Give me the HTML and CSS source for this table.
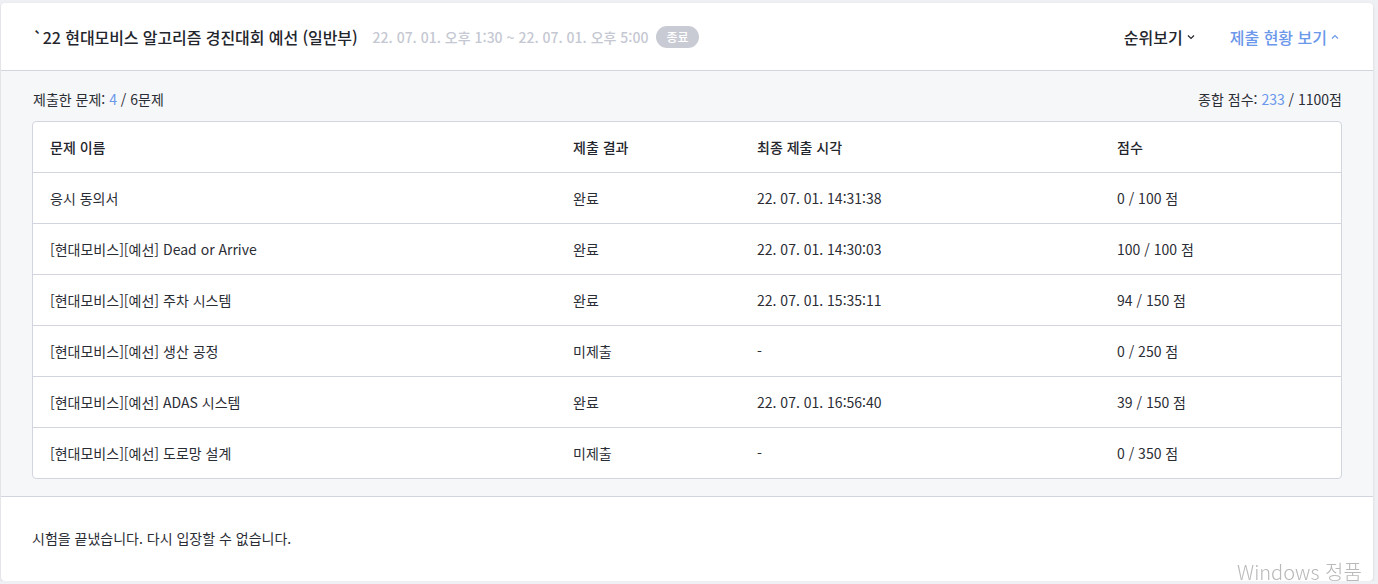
FILE: index.html
```html
<!DOCTYPE html>
<html lang="ko">
<head>
    <meta charset="UTF-8">
    <meta name="viewport" content="width=device-width, initial-scale=1.0">
    <title>제출 현황</title>

    <link rel="stylesheet" href="styles.css">
</head>
<body>

    <div class="card">
        <header class="card-header">
            <div class="title-group">
                <h1 class="title">`22 현대모비스 알고리즘 경진대회 예선 (일반부)</h1>
                <span class="period">22. 07. 01. 오후 1:30 ~ 22. 07. 01. 오후 5:00</span>
                <span class="badge">종료</span>
            </div>
            <nav class="actions">
                <a class="action">순위보기
                    <svg width="10" height="10" viewBox="0 0 10 10"><path d="M2 3.5 L5 6.5 L8 3.5" fill="none" stroke="currentColor" stroke-width="1.2"/></svg>
                </a>
                <a class="action active">제출 현황 보기
                    <svg width="10" height="10" viewBox="0 0 10 10"><path d="M2 6.5 L5 3.5 L8 6.5" fill="none" stroke="currentColor" stroke-width="1.2"/></svg>
                </a>
            </nav>
        </header>

        <section class="status">
            <div class="summary">
                <span>제출한 문제: <em>4</em> / 6문제</span>
                <span>종합 점수: <em>233</em> / 1100점</span>
            </div>

            <div class="table-wrap">
                <table class="results">
                    <colgroup>
                        <col style="width: 523px">
                        <col style="width: 184px">
                        <col style="width: 360px">
                        <col>
                    </colgroup>
                    <thead>
                        <tr>
                            <th>문제 이름</th>
                            <th>제출 결과</th>
                            <th>최종 제출 시각</th>
                            <th>점수</th>
                        </tr>
                    </thead>
                    <tbody>
                        <tr>
                            <td>응시 동의서</td>
                            <td>완료</td>
                            <td>22. 07. 01. 14:31:38</td>
                            <td>0 / 100 점</td>
                        </tr>
                        <tr>
                            <td>[현대모비스][예선] Dead or Arrive</td>
                            <td>완료</td>
                            <td>22. 07. 01. 14:30:03</td>
                            <td>100 / 100 점</td>
                        </tr>
                        <tr>
                            <td>[현대모비스][예선] 주차 시스템</td>
                            <td>완료</td>
                            <td>22. 07. 01. 15:35:11</td>
                            <td>94 / 150 점</td>
                        </tr>
                        <tr>
                            <td>[현대모비스][예선] 생산 공정</td>
                            <td>미제출</td>
                            <td>-</td>
                            <td>0 / 250 점</td>
                        </tr>
                        <tr>
                            <td>[현대모비스][예선] ADAS 시스템</td>
                            <td>완료</td>
                            <td>22. 07. 01. 16:56:40</td>
                            <td>39 / 150 점</td>
                        </tr>
                        <tr>
                            <td>[현대모비스][예선] 도로망 설계</td>
                            <td>미제출</td>
                            <td>-</td>
                            <td>0 / 350 점</td>
                        </tr>
                    </tbody>
                </table>
            </div>
        </section>

        <footer class="card-footer">
            시험을 끝냈습니다. 다시 입장할 수 없습니다.
        </footer>
    </div>

    <div class="watermark">Windows 정품</div>

</body>
</html>
```

FILE: styles.css
```css
* {
    margin: 0;
    padding: 0;
    box-sizing: border-box;
}

body {
    font-family: "Noto Sans CJK KR", "Noto Sans", sans-serif;
    font-size: 14px;
    color: #2b2d35;
    background: #eef0f3;
    padding: 3px 5px 0 1px;
    overflow: hidden;
}

.card {
    background: #fff;
    border-radius: 4px;
    box-shadow: 0 1px 3px rgba(0, 0, 0, 0.12);
    overflow: hidden;
}

.card-header {
    height: 68px;
    display: flex;
    align-items: center;
    justify-content: space-between;
    padding: 0 33px 0 32px;
    border-bottom: 1px solid #d3d5de;
}

.title-group {
    display: flex;
    align-items: center;
}

.title {
    font-size: 16px;
    font-weight: 500;
    color: #23252c;
    margin-right: 15px;
    letter-spacing: -0.005em;
}

.period {
    font-size: 14px;
    font-weight: 500;
    color: #c5c8d2;
    margin-right: 8px;
}

.badge {
    display: inline-block;
    height: 22px;
    line-height: 22px;
    padding: 0 10px;
    border-radius: 11px;
    background: #c9cbd4;
    color: #fff;
    font-size: 12px;
    font-weight: 500;
}

.actions {
    display: flex;
    align-items: center;
    gap: 34px;
}

.action {
    display: flex;
    align-items: center;
    gap: 3px;
    font-size: 16px;
    font-weight: 500;
    color: #23252c;
    cursor: pointer;
}

.action.active {
    color: #6b98ea;
}

.status {
    background: #f6f7f9;
    padding: 18px 31px 17px 31px;
    border-bottom: 1px solid #d3d5de;
}

.summary {
    display: flex;
    justify-content: space-between;
    height: 20px;
    line-height: 20px;
    margin-bottom: 12px;
    font-size: 14px;
    padding: 0 0 0 1px;
}

.summary em {
    font-style: normal;
    color: #6b98ea;
}

.table-wrap {
    background: #fff;
    border: 1px solid #d3d5de;
    border-radius: 4px;
    overflow: hidden;
}

.results {
    width: 100%;
    border-collapse: collapse;
    table-layout: fixed;
}

.results th,
.results td {
    height: 50px;
    padding: 0 0 0 17px;
    text-align: left;
    font-size: 14px;
    white-space: nowrap;
}

.results th {
    font-weight: 500;
    color: #23252c;
}

.results tbody tr td {
    height: 51px;
    border-top: 1px solid #d3d5de;
}

.card-footer {
    height: 84px;
    padding: 31px 31px 0;
    font-size: 14px;
    line-height: 20px;
}

.watermark {
    position: fixed;
    left: 1237px;
    top: 560px;
    white-space: nowrap;
    font-family: "Noto Sans CJK KR", sans-serif;
    font-size: 20px;
    font-weight: 300;
    color: #b9b9bb;
    line-height: 24px;
}
```
